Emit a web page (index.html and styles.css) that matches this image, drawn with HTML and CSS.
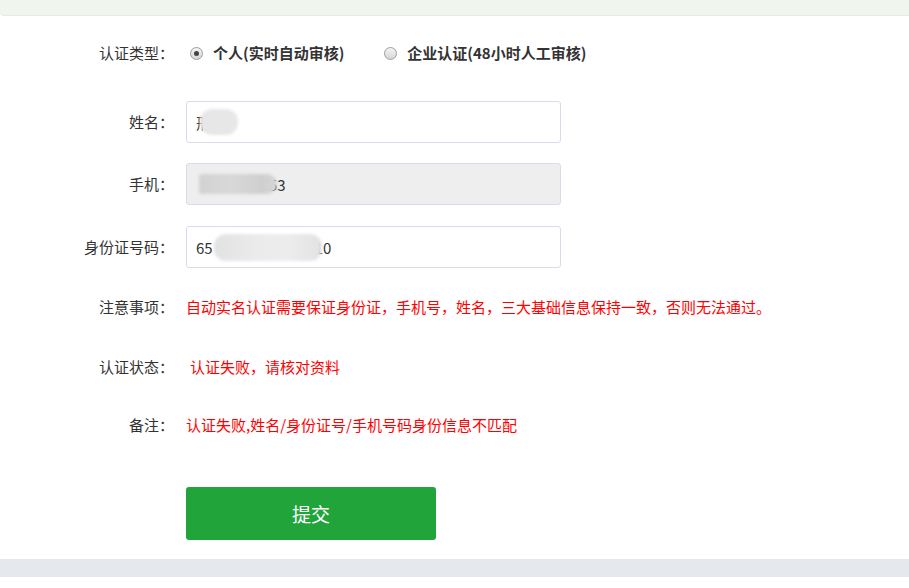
FILE: index.html
```html
<!DOCTYPE html>
<html lang="zh-CN">
<head>
<meta charset="utf-8">
<title>实名认证</title>
<link rel="stylesheet" href="styles.css">
</head>
<body>
<div class="topbar"></div>
<main class="form">
  <div class="row row-type">
    <div class="label">认证类型：</div>
    <div class="radios">
      <label class="radio checked"><span class="dot"></span><span class="rtext">个人(实时自动审核)</span></label>
      <label class="radio"><span class="dot"></span><span class="rtext">企业认证(48小时人工审核)</span></label>
    </div>
  </div>
  <div class="row row-input row-name">
    <div class="label">姓名：</div>
    <div class="field"><span>邢</span><span class="blob blob-name"></span></div>
  </div>
  <div class="row row-input row-phone">
    <div class="label">手机：</div>
    <div class="field disabled"><span class="blob blob-phone"></span><span class="after-phone">53</span></div>
  </div>
  <div class="row row-input row-id">
    <div class="label">身份证号码：</div>
    <div class="field"><span>65</span><span class="blob blob-id"></span><span class="after-id">10</span></div>
  </div>
  <div class="row row-text row-notice">
    <div class="label">注意事项：</div>
    <div class="red">自动实名认证需要保证身份证，手机号，姓名，三大基础信息保持一致，否则无法通过。</div>
  </div>
  <div class="row row-text row-status">
    <div class="label">认证状态：</div>
    <div class="red status">认证失败，请核对资料</div>
  </div>
  <div class="row row-text row-remark">
    <div class="label">备注：</div>
    <div class="red">认证失败,姓名/身份证号/手机号码身份信息不匹配</div>
  </div>
  <div class="row row-btn">
    <div class="label"></div>
    <button class="submit" type="button">提交</button>
  </div>
</main>
<div class="bottombar"></div>
</body>
</html>
```

FILE: styles.css
```css
* { box-sizing: border-box; }
html, body { margin: 0; padding: 0; background: #ffffff; }
body {
  font-family: "Noto Sans CJK SC", "Noto Sans", sans-serif;
  color: #333333;
  font-size: 15px;
  width: 909px;
  overflow: hidden;
}
.topbar {
  height: 16px;
  background: #f0f5ee;
  border-bottom: 1px solid #e5ece3;
  border-bottom-left-radius: 4px;
  margin-right: -10px;
}
.form {
  padding-top: 21px;
  padding-bottom: 19px;
}
.row {
  display: flex;
  align-items: center;
}
.label {
  width: 174px;
  flex: none;
  text-align: right;
  padding-right: 0;
  margin-right: 12px;
  font-size: 15px;
  line-height: 20px;
  color: #333;
}
.row-type { height: 32px; }
.radios { display: flex; align-items: center; margin-left: 4px; }
.radio {
  display: flex;
  align-items: center;
  font-weight: bold;
  font-size: 15px;
  line-height: 20px;
  color: #333;
  margin-right: 40px;
}
.dot {
  width: 13px;
  height: 13px;
  border-radius: 50%;
  border: 1px solid #9d9d9d;
  background: linear-gradient(#f4f4f4, #d6d6d6);
  margin-right: 10px;
  display: flex;
  align-items: center;
  justify-content: center;
}
.radio.checked .dot::after {
  content: "";
  width: 5px;
  height: 5px;
  border-radius: 50%;
  background: #444;
}
.row-input { height: 42px; }
.row-name { margin-top: 32px; }
.row-phone { margin-top: 20px; }
.row-id { margin-top: 21px; }
.field {
  width: 375px;
  height: 42px;
  border: 1px solid #dcdaea;
  border-radius: 3px;
  padding: 0 9px;
  display: flex;
  align-items: center;
  font-size: 15px;
  color: #333;
  background: #fff;
}
.field.disabled { background: #eeeeee; }
.blob {
  display: inline-block;
  position: relative;
  border-radius: 12px;
  filter: blur(1.5px);
}
.blob-name {
  width: 38px;
  height: 26px;
  background: #e7e7e7;
  margin-left: -11px;
}
.blob-phone {
  width: 78px;
  height: 20px;
  margin-left: 3px;
  border-radius: 4px 12px 12px 4px;
  background: linear-gradient(90deg, #d2d2d2, #d8d8d8 40%, #cfcfcf 80%, #d6d6d6);
}
.after-phone { margin-left: -8px; }
.blob-id {
  width: 108px;
  height: 27px;
  margin-left: 1px;
  background: linear-gradient(90deg, #e2e2e2, #ebebeb 40%, #ececec 70%, #e2e2e2);
}
.after-id { margin-left: -7px; }
.row-text { height: 30px; }
.row-notice { margin-top: 24px; }
.row-status { margin-top: 30px; }
.row-remark { margin-top: 28px; }
.red {
  color: #ff0000;
  font-size: 15px;
  line-height: 20px;
}
.red.status { padding-left: 4px; }
.row-btn { margin-top: 47px; }
.submit {
  width: 250px;
  height: 53px;
  border: none;
  border-radius: 3px;
  background: #21a53b;
  color: #fff;
  font-family: "Noto Sans CJK SC", sans-serif;
  font-size: 19px;
  padding: 0;
}
.bottombar {
  height: 18px;
  background: #e5e8ec;
}
```
